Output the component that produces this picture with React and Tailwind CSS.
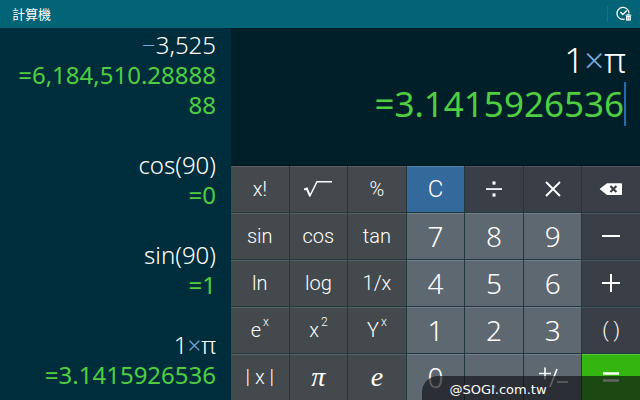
import React, { useState } from 'react';
import clsx from 'clsx';

const history = [
  { expr: [['−', true], ['3,525']], result: '=6,184,510.2888888' },
  { expr: [['cos(90)']], result: '=0' },
  { expr: [['sin(90)']], result: '=1' },
  { expr: [['1'], ['×', true], ['π']], result: '=3.1415926536' }
];

const SqrtIcon = () => (
  <svg viewBox="0 0 28 18" className="w-7 h-[18px]" fill="none" stroke="currentColor">
    <path d="M0 9.6 L2.8 8.6 L6 16" strokeWidth="2" />
    <path d="M5.6 16.5 L13 1.7 H28" strokeWidth="1.5" />
  </svg>
);

const DivideIcon = () => (
  <svg viewBox="0 0 18 18" className="w-[18px] h-[18px]" fill="currentColor">
    <rect x="1" y="8.2" width="16" height="1.7" />
    <rect x="7.5" y="1.4" width="3" height="3.2" />
    <rect x="7.5" y="13.4" width="3" height="3.2" />
  </svg>
);

const TimesIcon = () => (
  <svg viewBox="0 0 16 16" className="w-4 h-4" stroke="currentColor" strokeWidth="1.9">
    <path d="M1 1 L15 15 M15 1 L1 15" />
  </svg>
);

const BackspaceIcon = () => (
  <svg viewBox="0 0 24 14" className="w-6 h-3.5">
    <path d="M0.6 7 L8 1.2 H22.2 Q23 1.2 23 2 V12.2 Q23 13 22.2 13 H8 Z" fill="currentColor" />
    <path d="M11.4 4 L17.4 10 M17.4 4 L11.4 10" stroke="#3a3f47" strokeWidth="2.2" />
  </svg>
);

const MinusIcon = () => (
  <svg viewBox="0 0 20 20" className="w-5 h-5" stroke="currentColor" strokeWidth="2">
    <path d="M1 10 H19" />
  </svg>
);

const PlusIcon = () => (
  <svg viewBox="0 0 20 20" className="w-5 h-5" stroke="currentColor" strokeWidth="2">
    <path d="M1 10 H19 M10 1 V19" />
  </svg>
);

const EqualsIcon = () => (
  <svg viewBox="0 0 16 10" className="w-4 h-2.5" stroke="currentColor" strokeWidth="2.4">
    <path d="M0 1.5 H16 M0 8.5 H16" />
  </svg>
);

const SignIcon = () => (
  <svg viewBox="0 0 30 20" className="w-[30px] h-5" fill="none" stroke="currentColor" strokeWidth="1.6">
    <path d="M1 6.5 H13 M7 0.5 V12.5 M19 2 L12 20 M19 15 H30" />
  </svg>
);

const ClearHistoryIcon = () => (
  <svg viewBox="0 0 16 16" className="w-4 h-4" fill="none" stroke="currentColor">
    <path d="M8.6 13.2 A6 6 0 1 1 13 7.2" strokeWidth="1.3" />
    <path d="M4.4 6 L6.8 8.4 L10.8 4.6" strokeWidth="1.4" />
    <path d="M9.4 9.2 H15.4 M11.4 8.4 H13.4" strokeWidth="1" />
    <path d="M10 10 H14.8 V14.6 H10 Z" fill="currentColor" stroke="none" />
    <path d="M11.6 11 V13.6 M13.2 11 V13.6" stroke="#036477" strokeWidth="0.5" />
  </svg>
);

const keys = [
  { id: 'factorial', label: 'x!', kind: 'fn' },
  { id: 'square root', label: <SqrtIcon />, kind: 'fn' },
  { id: 'percent', label: '%', kind: 'fn' },
  { id: 'clear', label: 'C', kind: 'clear' },
  { id: 'divide', label: <DivideIcon />, kind: 'op' },
  { id: 'multiply', label: <TimesIcon />, kind: 'op' },
  { id: 'backspace', label: <BackspaceIcon />, kind: 'op' },

  { id: 'sine', label: 'sin', kind: 'fn' },
  { id: 'cosine', label: 'cos', kind: 'fn' },
  { id: 'tangent', label: 'tan', kind: 'fn' },
  { id: '7', label: '7', kind: 'num' },
  { id: '8', label: '8', kind: 'num' },
  { id: '9', label: '9', kind: 'num' },
  { id: 'minus', label: <MinusIcon />, kind: 'op' },

  { id: 'natural log', label: 'ln', kind: 'fn' },
  { id: 'log', label: 'log', kind: 'fn' },
  { id: 'reciprocal', label: '1/x', kind: 'fn' },
  { id: '4', label: '4', kind: 'num' },
  { id: '5', label: '5', kind: 'num' },
  { id: '6', label: '6', kind: 'num' },
  { id: 'plus', label: <PlusIcon />, kind: 'op' },

  { id: 'exponential', label: 'e', sup: 'x', kind: 'fn' },
  { id: 'square', label: 'x', sup: '2', kind: 'fn' },
  { id: 'power', label: 'Y', sup: 'x', kind: 'fn' },
  { id: '1', label: '1', kind: 'num' },
  { id: '2', label: '2', kind: 'num' },
  { id: '3', label: '3', kind: 'num' },
  { id: 'brackets', label: '( )', kind: 'op' },

  { id: 'absolute value', label: '| x |', kind: 'fn' },
  { id: 'pi', label: 'π', kind: 'serif' },
  { id: 'e', label: 'e', kind: 'serif' },
  { id: '0', label: '0', kind: 'num' },
  { id: 'point', label: '.', kind: 'num' },
  { id: 'sign', label: <SignIcon />, kind: 'num' },
  { id: 'equals', label: <EqualsIcon />, kind: 'equals' }
];

const kindClass = {
  fn: 'bg-[#43494c] border-[#566165] font-[Roboto,sans-serif] text-xl font-light',
  serif: 'bg-[#43494c] border-[#566165] font-["Liberation_Serif",serif] text-[28px] italic',
  clear: 'bg-[#34699c] border-[#5285b0] font-[Roboto,sans-serif] text-2xl font-light',
  op: 'bg-[#3a3f47] border-[#4c565e] font-[Roboto,sans-serif] text-xl font-light',
  num: 'bg-[#5e6870] border-[#74818a] font-["Noto_Sans",sans-serif] text-[28px] font-light',
  equals: 'bg-[#35b50f] border-[#5cc93c]'
};

const Expression = ({ parts }) => (
  <>
    {parts.map(([text, isOperator], i) => (
      <span key={i} className={clsx(isOperator && 'text-[#7aa9dc]')}>{text}</span>
    ))}
  </>
);

const Calculator = () => {
  const [current, setCurrent] = useState(history[history.length - 1]);

  const handleKey = (id) => {
    if (id === 'clear') setCurrent({ expr: [], result: '' });
  };

  return (
    <div className="relative min-h-screen flex flex-col bg-[#002d3b] text-white">
      {/* Title bar */}
      <header className="h-7 shrink-0 flex items-center justify-between pl-3 pr-2 bg-[#036477]">
        <h1 className='font-["Noto_Sans_CJK_TC",sans-serif] text-[13px] leading-5'>計算機</h1>
        <button aria-label="Clear history" className="flex items-center h-4 pl-2 border-l border-[#1c6f80]">
          <ClearHistoryIcon />
        </button>
      </header>

      <div className="flex-1 grid grid-cols-[231fr_409fr]">
        {/* History */}
        <aside className='pt-0.5 pl-4 pr-[15px] flex flex-col gap-[30px] text-right font-["Noto_Sans",sans-serif] text-2xl leading-[30px] font-light'>
          {history.map((item, i) => (
            <div key={i}>
              <p><Expression parts={item.expr} /></p>
              <p className="break-all font-normal text-[#4fce41]">{item.result}</p>
            </div>
          ))}
        </aside>

        <main className="flex flex-col">
          {/* Display */}
          <div className='flex-1 pt-2.5 pr-3.5 flex flex-col items-end bg-[#001f29] font-["Noto_Sans",sans-serif] text-[35px] leading-[44px] font-light'>
            <p><Expression parts={current.expr} /></p>
            <p className="border-r-2 border-[#1f6cae] font-normal text-[#4fce41]">{current.result}</p>
          </div>

          {/* Keypad */}
          <div className="grid grid-cols-7 gap-px bg-[#23373e] border-t border-[#00151c]">
            {keys.map(key => (
              <button
                key={key.id}
                aria-label={key.id}
                onClick={() => handleKey(key.id)}
                className={clsx('h-[46px] pb-0.5 flex items-center justify-center border-t leading-none', kindClass[key.kind])}
              >
                {key.label}
                {key.sup && <sup className="pl-0.5 pb-1 text-xs leading-3">{key.sup}</sup>}
              </button>
            ))}
          </div>
        </main>
      </div>

      {/* Watermark */}
      <div className='absolute bottom-0 right-0 w-[34%] h-6 pl-[27px] pt-1 flex items-center rounded-tl-2xl bg-[#101014]/65 font-["DejaVu_Sans",sans-serif] text-[13px] text-white'>
        @SOGI.com.tw
      </div>
    </div>
  );
};

export default Calculator;
